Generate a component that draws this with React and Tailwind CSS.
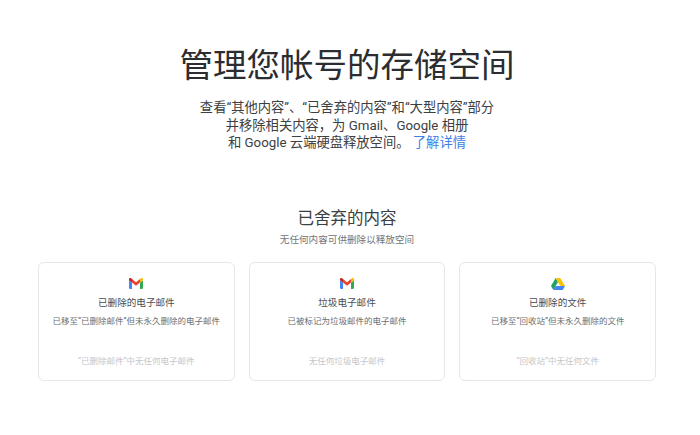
import React from "react";

const fontStack = "font-['Roboto','Noto_Sans_CJK_SC',sans-serif]";

const GmailIcon = () => (
  <svg width="14" height="11" viewBox="0 0 14 11">
    <path d="M0 2.2V9.8C0 10.4.5 11 1.1 11H3V4.6L0 2.2Z" fill="#4285F4" />
    <path d="M11 11h1.9c.6 0 1.1-.6 1.1-1.2V2.2L11 4.6V11Z" fill="#34A853" />
    <path d="M11 1v3.6l3-2.4V1.300C14 .2 12.800-.4 12 .2L11 1Z" fill="#FBBC04" />
    <path d="M3 4.600V1L7 4.200 11 1v3.600L7 7.800 3 4.600Z" fill="#EA4335" />
    <path d="M0 1.300v.9l3 2.400V1L2 .2C1.200-.4 0 .2 0 1.300Z" fill="#C5221F" />
  </svg>
);

const DriveIcon = () => (
  <svg width="14" height="12" viewBox="0 0 14 12">
    <path d="M4.700 0 0 8l2.300 4 4.700-8L4.700 0Z" fill="#1FA463" />
    <path d="M4.700 0h4.600L14 8H9.300L4.700 0Z" fill="#FFC107" />
    <path d="M4.600 8H14l-2.300 4H2.300l2.300-4Z" fill="#4285F4" />
  </svg>
);

const cards = [
  {
    icon: <GmailIcon />,
    title: "已删除的电子邮件",
    desc: "已移至“已删除邮件”但未永久删除的电子邮件",
    empty: "“已删除邮件”中无任何电子邮件",
  },
  {
    icon: <GmailIcon />,
    title: "垃圾电子邮件",
    desc: "已被标记为垃圾邮件的电子邮件",
    empty: "无任何垃圾电子邮件",
  },
  {
    icon: <DriveIcon />,
    title: "已删除的文件",
    desc: "已移至“回收站”但未永久删除的文件",
    empty: "“回收站”中无任何文件",
  },
];

export default function App() {
  return (
    <div className={`w-[700px] h-[435px] overflow-hidden bg-white text-center ${fontStack}`}>
      <div className="pl-[38px] pr-[44px] pt-[43px]">
        <h1 className="text-[33.500px] leading-[46px] font-normal text-[#2b2d30]">
          管理您帐号的存储空间
        </h1>
        <p className="mt-[10px] text-[13.300px] leading-[17.500px] text-[#3c4043]">
          查看“其他内容”、“已舍弃的内容”和“大型内容”部分
          <br />
          并移除相关内容，为 Gmail、Google 相册
          <br />和 Google 云端硬盘释放空间。{" "}
          <a className="text-[#3f7ee8]">了解详情</a>
        </p>

        <h2 className="mt-[56px] text-[16.500px] leading-[22px] font-normal text-[#3c4043]">
          已舍弃的内容
        </h2>
        <p className="mt-[3px] text-[9.600px] leading-[14px] text-[#70757a]">
          无任何内容可供删除以释放空间
        </p>

        <div className="mt-[15px] grid grid-cols-3 gap-[14px]">
          {cards.map((card) => (
            <div
              key={card.title}
              className="h-[119px] rounded-[6px] border border-[#e6e7e9] px-2 pt-[15px] flex flex-col items-center"
            >
              <div className="h-[12px] flex items-center">{card.icon}</div>
              <div className="mt-[6px] text-[9.600px] leading-[14px] text-[#4a4d51]">
                {card.title}
              </div>
              <div className="mt-[4px] text-[8.500px] leading-[14px] text-[#6b6f73]">
                {card.desc}
              </div>
              <div className="mt-[26px] text-[8.500px] leading-[14px] text-[#c4c7ca]">
                {card.empty}
              </div>
            </div>
          ))}
        </div>
      </div>
    </div>
  );
}
